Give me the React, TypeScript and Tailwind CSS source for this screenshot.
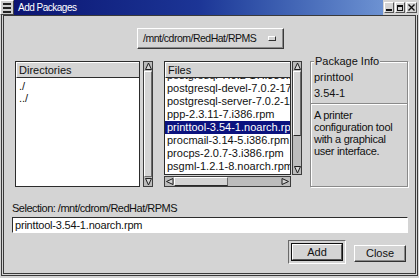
import React from "react";

const files = [
  "postgresql-7.0.2-17.i386.rpm",
  "postgresql-devel-7.0.2-17.i386.rpm",
  "postgresql-server-7.0.2-17.i386.rpm",
  "ppp-2.3.11-7.i386.rpm",
  "printtool-3.54-1.noarch.rpm",
  "procmail-3.14-5.i386.rpm",
  "procps-2.0.7-3.i386.rpm",
  "psgml-1.2.1-8.noarch.rpm",
];

function Arrow({ dir }: { dir: "up" | "down" | "left" | "right" }) {
  const d = {
    up: "M1.5 7.5 L4.5 1 L7.5 7.5 Z",
    down: "M1.5 1.5 L4.5 8 L7.5 1.5 Z",
    left: "M8 1.5 L1.5 4.5 L8 7.5 Z",
    right: "M1 1.5 L7.5 4.5 L1 7.5 Z",
  }[dir];
  return (
    <svg width="9" height="9" viewBox="0 0 9 9" className="shrink-0">
      <path d={d} fill="#d4d4d4" stroke="#1e1e1e" strokeWidth="1" />
    </svg>
  );
}

function VScroll({ thumb }: { thumb: "full" | "partial" }) {
  return (
    <div className="w-[10px] flex flex-col border border-[#3c3c3c] bg-[#bcbcbc]">
      <Arrow dir="up" />
      {thumb === "full" ? (
        <div className="flex-1 border border-t-white border-l-white border-b-[#6a6a6a] border-r-[#6a6a6a] bg-[#d4d4d4]" />
      ) : (
        <div className="flex-1 flex flex-col">
          <div className="h-[65px] border border-t-white border-l-white border-b-[#2a2a2a] border-r-[#6a6a6a] bg-[#d4d4d4]" />
          <div className="flex-1" />
        </div>
      )}
      <Arrow dir="down" />
    </div>
  );
}

export default function App() {
  return (
    <div className="w-[419px] h-[278px] bg-[#d4d4d4] flex flex-col overflow-hidden font-['Liberation_Sans',Arial,sans-serif] text-[11px] text-[#111]">
      {/* title bar */}
      <div className="h-[15px] flex items-stretch shrink-0">
        <div className="w-[14px] bg-[#cfcfcf] border border-t-white border-l-white border-b-[#444] border-r-[#444] flex flex-col justify-center gap-[2px] px-[2px]">
          <div className="h-[2px] bg-[#222]" />
          <div className="h-[2px] bg-[#222]" />
          <div className="h-[2px] bg-[#222]" />
        </div>
        <div className="flex-1 bg-linear-to-r from-[#0c1472] via-[#1c3596] to-[#6d92d2] text-white text-[10px] tracking-[-0.5px] leading-[15px] pl-[4px]">
          Add Packages
        </div>
        <div className="w-[36px] flex items-center gap-[1px] px-[1px] bg-[#d4d4d4]">
          <div className="w-[10px] h-[11px] border border-t-white border-l-white border-b-[#555] border-r-[#555] flex items-end justify-center pb-[1px]">
            <div className="w-[6px] h-[2px] bg-[#111]" />
          </div>
          <div className="w-[10px] h-[11px] border border-t-white border-l-white border-b-[#555] border-r-[#555] flex items-center justify-center">
            <div className="w-[6px] h-[6px] border border-t-2 border-[#111]" />
          </div>
          <div className="w-[11px] h-[11px] border border-t-white border-l-white border-b-[#555] border-r-[#555] flex items-center justify-center">
            <svg width="7" height="7" viewBox="0 0 7 7">
              <path d="M0.5 0.5 L6.5 6.5 M6.5 0.5 L0.5 6.5" stroke="#111" strokeWidth="1.4" />
            </svg>
          </div>
        </div>
      </div>

      {/* window frame */}
      <div className="flex-1 px-[1px] pb-[2px] flex">
        <div className="flex-1 border border-t-0 border-[#3a3a3a] px-[1px] pb-[1px] flex">
          <div className="flex-1 border border-[#3a3a3a] flex flex-col">
            {/* directory combo */}
            <div className="mt-[12px] flex justify-center pl-[2px]">
              <div className="w-[147px] h-[21px] flex items-center justify-between pl-[5px] pr-[7px] border border-t-white border-l-white border-b-[#3a3a3a] border-r-[#3a3a3a] shadow-[inset_-1px_-1px_0_#8a8a8a] text-[10.5px] tracking-[-0.5px]">
                <span>/mnt/cdrom/RedHat/RPMS</span>
                <div className="w-[8px] h-[5px] border border-t-white border-l-white border-b-[#333] border-r-[#333]" />
              </div>
            </div>

            {/* lists */}
            <div className="mt-[12px] ml-[11px] h-[126px] flex">
              <div className="w-[125px] flex flex-col border border-[#2c2c2c] bg-white">
                <div className="h-[16px] bg-[#d4d4d4] border-b border-[#2c2c2c] border-t border-t-white border-l border-l-white px-[2px] leading-[15px]">
                  Directories
                </div>
                <div className="pt-[2px] px-[3px] leading-[12px]">
                  <div>./</div>
                  <div>../</div>
                </div>
              </div>
              <div className="ml-[3px] flex">
                <VScroll thumb="full" />
              </div>

              <div className="ml-[11px] w-[138px] flex flex-col">
                <div className="flex h-[114px]">
                  <div className="w-[127px] flex flex-col border border-[#2c2c2c] bg-white">
                    <div className="h-[16px] shrink-0 bg-[#d4d4d4] border-b border-[#2c2c2c] border-t border-t-white border-l border-l-white px-[2px] leading-[15px]">
                      Files
                    </div>
                    <div className="flex-1 overflow-hidden">
                      <div className="-mt-[9px] leading-[13px] whitespace-nowrap">
                        {files.map((f) => (
                          <div
                            key={f}
                            className={
                              f.startsWith("printtool")
                                ? "bg-[#0b127e] text-white px-[2px]"
                                : "px-[2px]"
                            }
                          >
                            {f}
                          </div>
                        ))}
                      </div>
                    </div>
                  </div>
                  <div className="ml-[1px] flex">
                    <VScroll thumb="partial" />
                  </div>
                </div>
                <div className="mt-[1px] w-[127px] h-[11px] flex items-center border border-[#3c3c3c] bg-[#bcbcbc]">
                  <Arrow dir="left" />
                  <div className="w-[54px] h-full border border-t-white border-l-white border-b-[#2a2a2a] border-r-[#6a6a6a] bg-[#d4d4d4]" />
                  <div className="flex-1" />
                  <Arrow dir="right" />
                </div>
              </div>

              {/* package info */}
              <div className="ml-[8px] w-[98px] relative border border-[#8a8a8a] shadow-[inset_1px_1px_0_white,1px_1px_0_white] px-[3px] pt-[9px] leading-[13px]">
                <span className="absolute -top-[7px] left-[3px] bg-[#d4d4d4] px-[1px] leading-[13px]">
                  Package Info
                </span>
                <div>printtool</div>
                <div className="mt-[3px]">3.54-1</div>
                <div className="mt-[3px] -mx-[3px] border-t border-[#8a8a8a] border-b border-b-white" />
                <div className="mt-[4px] leading-[12px] tracking-[-0.3px]">
                  A printer configuration tool with a graphical user interface.
                </div>
              </div>
            </div>

            {/* selection */}
            <div className="mt-[15px] ml-[8px] leading-[13px] tracking-[-0.5px]">
              Selection: /mnt/cdrom/RedHat/RPMS
            </div>
            <div className="mt-[2px] ml-[8px] w-[396px] h-[16px] bg-white border border-t-[#2c2c2c] border-l-[#2c2c2c] border-b-white border-r-white px-[2px] leading-[14px] tracking-[-0.2px]">
              printtool-3.54-1.noarch.rpm
            </div>

            {/* buttons */}
            <div className="mt-[7px] flex justify-end items-start pr-[9px] gap-[8px]">
              <div className="p-[2px] border border-t-[#6a6a6a] border-l-[#6a6a6a] border-b-white border-r-white">
                <div className="w-[52px] h-[18px] border border-[#111] flex">
                  <div className="flex-1 border border-t-white border-l-white border-b-[#555] border-r-[#555] flex items-center justify-center">
                    Add
                  </div>
                </div>
              </div>
              <div className="mt-[5px] w-[52px] h-[17px] border border-t-white border-l-white border-b-[#333] border-r-[#333] shadow-[inset_-1px_-1px_0_#8a8a8a] flex items-center justify-center">
                Close
              </div>
            </div>
          </div>
        </div>
      </div>
    </div>
  );
}
